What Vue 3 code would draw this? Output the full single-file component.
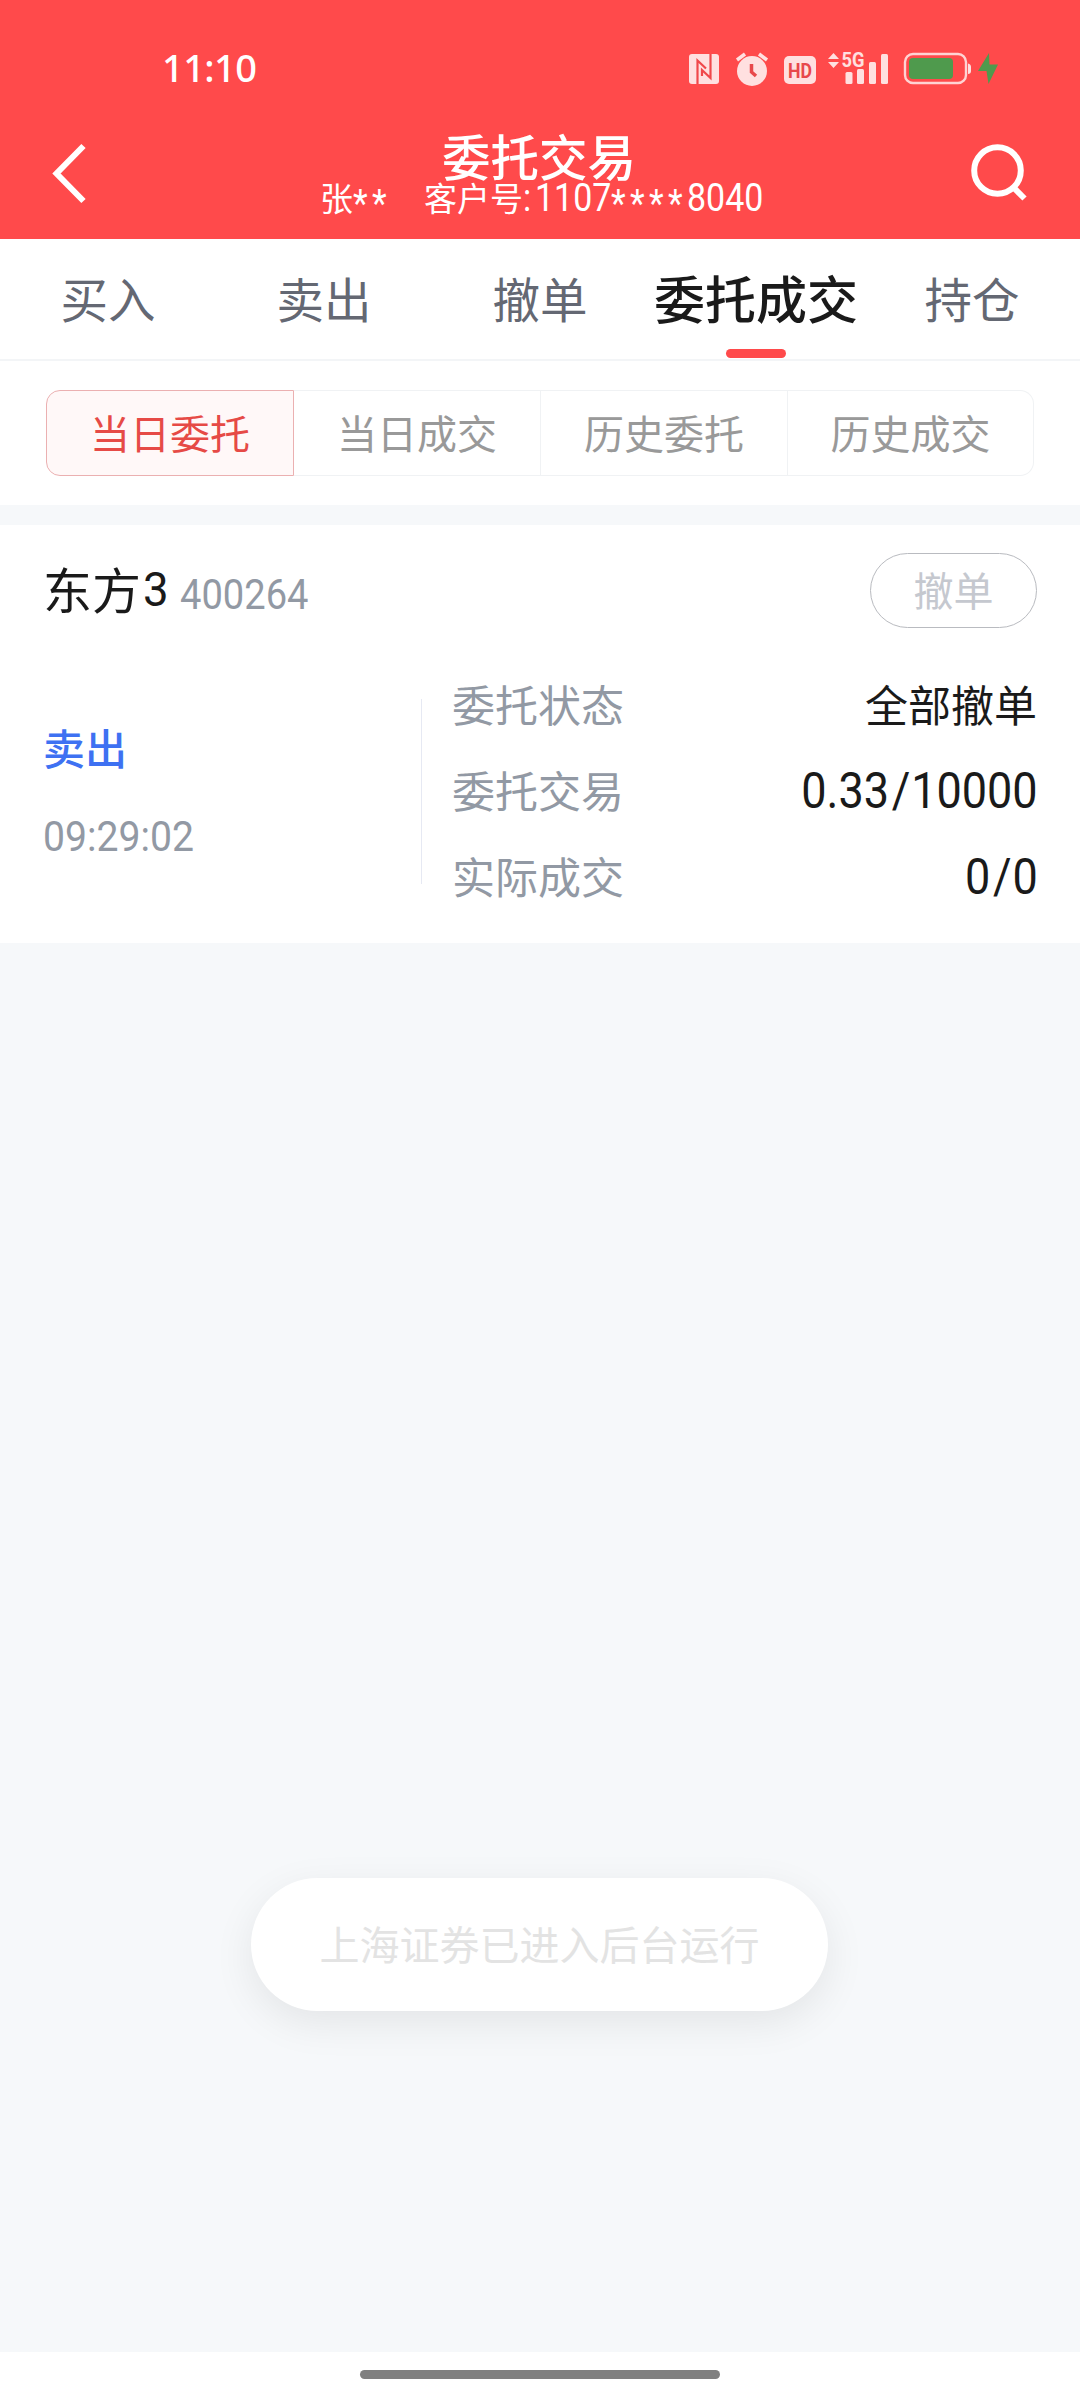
<script setup>
import { ref } from 'vue';

const tabs = ['买入', '卖出', '撤单', '委托成交', '持仓'];
const tabActiva = ref('委托成交');

const filtros = ['当日委托', '当日成交', '历史委托', '历史成交'];
const filtroActivo = ref('当日委托');

const orden = {
    nombre: '东方',
    serie: '3',
    codigo: '400264',
    operacion: '卖出',
    hora: '09:29:02',
    estado: '全部撤单',
    cantidades: [
        { etiqueta: '委托交易', precio: '0.33', cantidad: '10000' },
        { etiqueta: '实际成交', precio: '0', cantidad: '0' }
    ]
};
</script>

<template>
    <div class="pantalla">
        <header>
            <div class="estado">
                <span class="reloj">11:10</span>
                <svg class="iconos" width="320" height="60" viewBox="0 -10 320 60">
                    <g fill="#ffe0e0">
                        <rect x="9" y="4" width="30" height="30" rx="3" />
                        <path d="M17.500 34V10.500L26 18.500M30.500 4V28L22 20V26" fill="none" stroke="#f0484b" stroke-width="2.2" />
                        <circle cx="72" cy="21" r="15" />
                        <path d="M57 10L65 4M79 4L87 10" stroke="#ffe0e0" stroke-width="3.5" />
                        <path d="M71.500 14V22L76 26" fill="none" stroke="#e8484b" stroke-width="3.500" />
                        <rect x="104" y="6" width="32" height="28" rx="5" />
                        <path d="M148 9L153.500 3L159 9ZM148 12L153.500 18L159 12Z" />
                        <rect x="165.500" y="22" width="7" height="12" rx="1.500" />
                        <rect x="177" y="19" width="7" height="15" rx="1.500" />
                        <rect x="189" y="12" width="7" height="22" rx="1.500" />
                        <rect x="201" y="4" width="7" height="30" rx="1.500" />
                        <path d="M288 13.500Q291 14 291 17V21Q291 24 288 24Z" />
                    </g>
                    <text x="120" y="27.500" class="hd" text-anchor="middle" textLength="24" lengthAdjust="spacingAndGlyphs">HD</text>
                    <text x="161.500" y="17" class="red" textLength="23" lengthAdjust="spacingAndGlyphs">5G</text>
                    <rect x="225" y="4" width="61" height="29" rx="8" fill="none" stroke="#ffd3d3" stroke-width="2.400" />
                    <rect x="229" y="8" width="44" height="21" rx="4" fill="#4f9a4d" />
                    <path d="M309 3L298 21H306.500L308.500 34L318 14.500H309.500Z" fill="#4f9a4d" />
                </svg>
            </div>
            <div class="barra">
                <svg width="40" height="66" viewBox="0 0 40 66">
                    <path d="M35.500 6L8.500 33.500L35.500 61" fill="none" stroke="#fff" stroke-width="6" />
                </svg>
                <div class="cabecera">
                    <h1>委托交易</h1>
                    <p class="cliente">张<span class="din ast">**</span><span class="hueco"></span>客户号<span class="din dos">:</span><span class="din">1107</span><span class="din ast">****</span><span class="din">8040</span></p>
                </div>
                <svg width="60" height="62" viewBox="0 0 60 62">
                    <circle cx="27.500" cy="30.500" r="23.300" fill="none" stroke="#fff" stroke-width="6" />
                    <path d="M43 47L54.500 58.500" stroke="#fff" stroke-width="6" />
                </svg>
            </div>
        </header>

        <nav class="tabs">
            <div v-for="tab in tabs" :key="tab" class="tab" :class="{ activa: tab === tabActiva }" @click="tabActiva = tab">
                {{ tab }}
            </div>
        </nav>

        <div class="filtros">
            <button v-for="filtro in filtros" :key="filtro" :class="{ activo: filtro === filtroActivo }" @click="filtroActivo = filtro">
                {{ filtro }}
            </button>
        </div>

        <section class="orden">
            <div class="titulo">
                <span class="nombre">{{ orden.nombre }}</span>
                <span class="din serie">{{ orden.serie }}</span>
                <span class="din codigo">{{ orden.codigo }}</span>
                <button class="cancelar">撤单</button>
            </div>
            <div class="cuerpo">
                <div class="lado">
                    <p class="operacion">{{ orden.operacion }}</p>
                    <p class="hora"><span class="din">{{ orden.hora }}</span></p>
                </div>
                <div class="detalles">
                    <div class="fila">
                        <span class="etiqueta">委托状态</span>
                        <span class="valor">{{ orden.estado }}</span>
                    </div>
                    <div v-for="c in orden.cantidades" :key="c.etiqueta" class="fila">
                        <span class="etiqueta">{{ c.etiqueta }}</span>
                        <span class="valor din">{{ c.precio }}<span class="sep">/</span>{{ c.cantidad }}</span>
                    </div>
                </div>
            </div>
        </section>

        <main class="vacio">
            <div class="aviso">上海证券已进入后台运行</div>
        </main>

        <footer>
            <div class="gesto"></div>
        </footer>
    </div>
</template>

<style>
body {
    margin: 0;
}
</style>

<style scoped>
* {
    box-sizing: border-box;
}

p,
h1 {
    margin: 0;
}

button {
    font-family: inherit;
    padding: 0;
    background: none;
}

.pantalla {
    width: 1080px;
    height: 2400px;
    display: flex;
    flex-direction: column;
    background-color: #f6f8fa;
    font-family: "Noto Sans CJK SC", sans-serif;
    font-weight: 400;
    white-space: nowrap;
    overflow: hidden;
}

/* cifras estrechas */
.din {
    display: inline-block;
    font-family: Roboto, sans-serif;
    transform: scaleX(0.87);
    transform-origin: left center;
}

header {
    height: 239px;
    background-color: #ff4a4b;
    color: #fff;
}

.estado {
    height: 110px;
    padding: 40px 80px 0 162px;
    display: flex;
    justify-content: space-between;

    & .reloj {
        font-family: "Noto Sans", sans-serif;
        font-size: 38px;
        font-weight: 500;
        line-height: 38px;
        letter-spacing: -0.6px;
        margin-top: 8px;
    }

    & .hd {
        font: 700 21px Roboto, sans-serif;
        fill: #e8484b;
    }

    & .red {
        font: 700 20px Roboto, sans-serif;
        fill: #ffe0e0;
    }
}

.barra {
    height: 129px;
    padding: 0 50px 0 48px;
    display: flex;
    justify-content: space-between;

    & > svg {
        margin-top: 30px;
    }

    & h1 {
        font-size: 48.5px;
        font-weight: 500;
        line-height: 50px;
        text-align: center;
        margin: 20px 0 0 20px;
    }

    & .cliente {
        font-size: 33px;
        line-height: 34px;
        display: flex;
        align-items: center;
        height: 34px;
        margin-left: 21px;
    }

    & .din {
        position: relative;
        top: 1px;
        font-size: 39px;
        width: 76px;
    }

    & .din:last-child {
        width: 72px;
    }

    & .ast {
        top: 7px;
        letter-spacing: 5px;
    }

    & .ast:first-child {
        width: 38px;
    }

    & .dos {
        width: 12px;
    }

    & .hueco {
        width: 33px;
    }
}

.tabs {
    height: 122px;
    display: grid;
    grid-template-columns: repeat(5, 216px);
    background-color: #fff;
    border-bottom: 2px solid #f3f5f7;
}

.tab {
    position: relative;
    height: 120px;
    font-size: 47.5px;
    line-height: 117px;
    text-align: center;
    color: #646873;

    &.activa {
        font-size: 51px;
        font-weight: 500;
        color: #1a1a1a;
    }

    &.activa::after {
        content: "";
        position: absolute;
        left: 78px;
        bottom: 1px;
        width: 60px;
        height: 9px;
        border-radius: 4.5px;
        background-color: #ff4a4b;
    }
}

.filtros {
    height: 144px;
    padding: 29px 46px;
    display: grid;
    grid-template-columns: 248px 247px 247px 246px;
    background-color: #fff;

    & button {
        height: 86px;
        font-size: 40px;
        line-height: 80px;
        padding-bottom: 3px;
        color: #999;
        border: 1px solid #f0f2f4;
        border-left: none;
    }

    & button:first-child {
        border-left: 1px solid #f0f2f4;
        border-radius: 14px 0 0 14px;
    }

    & button:last-child {
        border-radius: 0 14px 14px 0;
    }

    & button.activo {
        color: #e64a46;
        background-color: #fff8f8;
        border: 1px solid #ebb0b1;
    }
}

.orden {
    height: 418px;
    margin-top: 20px;
    padding: 0 43px;
    background-color: #fff;
}

.titulo {
    height: 130px;
    display: flex;
    align-items: center;

    & .nombre {
        font-size: 49px;
        line-height: 60px;
        margin-top: -5px;
    }

    & .serie {
        font-size: 48px;
        width: 39px;
        margin-top: -2px;
        transform: scaleX(0.95) translateX(2px);
    }

    & .nombre,
    & .serie {
        color: #1a1a1a;
    }

    & .codigo {
        font-size: 42px;
        color: #9299a4;
        transform: scaleX(0.907);
        margin-top: 9px;
    }

    & .cancelar {
        margin-left: auto;
        width: 167px;
        height: 75px;
        padding-bottom: 3px;
        border: 1px solid #b9bbc0;
        border-radius: 38px;
        font-size: 40px;
        color: #c5c8cf;
    }
}

.cuerpo {
    display: flex;
    padding-top: 44px;
}

.lado {
    width: 379px;
    height: 185px;
    border-right: 1px solid #e6e9f3;

    & .operacion {
        font-size: 42px;
        font-weight: 500;
        line-height: 60px;
        margin-top: 18px;
        color: #3e71f2;
    }

    & .hora {
        line-height: 60px;
        margin-top: 25px;
        font-size: 43px;
        color: #9299a4;
    }

    & .din {
        transform: scaleX(0.91);
    }
}

.detalles {
    flex: 1;
    padding-left: 30px;
    margin-top: -39px;

    & .fila {
        height: 86px;
        display: flex;
        justify-content: space-between;
        align-items: center;
        font-size: 43px;
    }

    & .etiqueta {
        color: #9299a4;
    }

    & .valor {
        color: #1a1a1a;
    }

    & .valor.din {
        font-size: 50px;
        margin: 3px -1px 0 0;
        transform: scaleX(0.9);
        transform-origin: right center;
    }

    & .sep {
        margin: 0 1px 0 3px;
    }
}

.vacio {
    position: relative;
    flex: 1;
}

.aviso {
    position: absolute;
    left: 251px;
    top: 935px;
    width: 577px;
    height: 133px;
    border-radius: 67px;
    background-color: #fff;
    box-shadow: 0 12px 40px rgba(0, 0, 0, 0.08);
    font-size: 40px;
    line-height: 131px;
    text-align: center;
    color: #e3e3e3;
}

footer {
    height: 48px;
    padding-top: 18px;
    background-color: #fff;
}

.gesto {
    width: 360px;
    height: 9px;
    margin: 0 auto;
    border-radius: 5px;
    background-color: #808080;
}
</style>
